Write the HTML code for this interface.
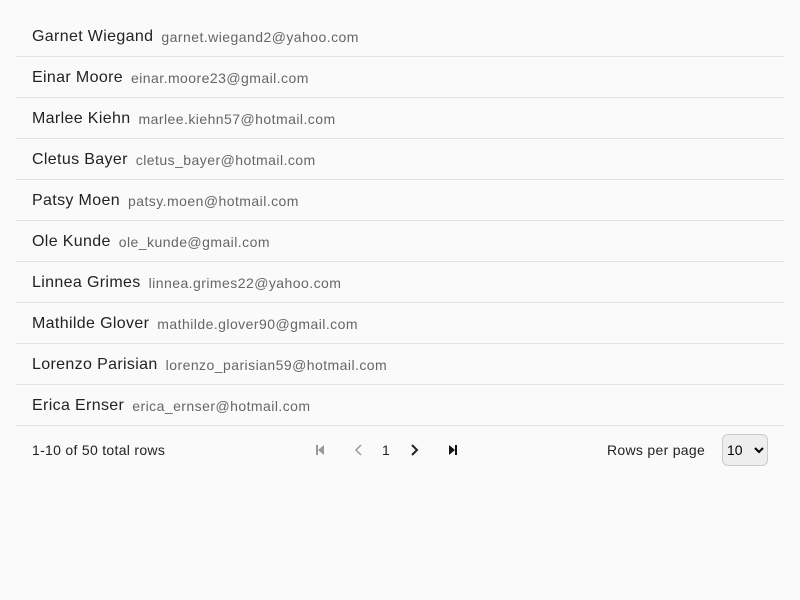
<!DOCTYPE html>
<html><head><style>
body{margin:0;background:#fafafa;font-family:"Liberation Sans",sans-serif;color:#222;}
.wrap{position:absolute;left:16px;top:16px;width:768px;}
.row{height:40px;border-bottom:1px solid #e4e4e4;display:flex;align-items:center;padding-left:16px;padding-top:1px;box-sizing:border-box;height:41px;}
.n{font-size:16px;color:#222;margin-right:8px;letter-spacing:0.35px;}
.e{font-size:14px;color:#666;letter-spacing:0.45px;}
.foot{position:absolute;top:434px;left:32px;right:32px;height:32px;font-size:14px;color:#222;letter-spacing:0.3px;}
.foot span{position:absolute;top:8px;}
select{position:absolute;left:690px;top:0;width:46px;height:32px;border:1px solid #ccc;border-radius:6px;background:#eee;font-size:14px;font-family:"Liberation Sans",sans-serif;}
svg{position:absolute;top:9px;}
</style></head><body>
<div class="wrap">
<div class="row"><span class="n">Garnet Wiegand</span><span class="e">garnet.wiegand2@yahoo.com</span></div>
<div class="row"><span class="n">Einar Moore</span><span class="e">einar.moore23@gmail.com</span></div>
<div class="row"><span class="n">Marlee Kiehn</span><span class="e">marlee.kiehn57@hotmail.com</span></div>
<div class="row"><span class="n">Cletus Bayer</span><span class="e">cletus_bayer@hotmail.com</span></div>
<div class="row"><span class="n">Patsy Moen</span><span class="e">patsy.moen@hotmail.com</span></div>
<div class="row"><span class="n">Ole Kunde</span><span class="e">ole_kunde@gmail.com</span></div>
<div class="row"><span class="n">Linnea Grimes</span><span class="e">linnea.grimes22@yahoo.com</span></div>
<div class="row"><span class="n">Mathilde Glover</span><span class="e">mathilde.glover90@gmail.com</span></div>
<div class="row"><span class="n">Lorenzo Parisian</span><span class="e">lorenzo_parisian59@hotmail.com</span></div>
<div class="row"><span class="n">Erica Ernser</span><span class="e">erica_ernser@hotmail.com</span></div>
</div>
<div class="foot">
<span style="left:0">1-10 of 50 total rows</span>
<svg style="left:281px" width="14" height="14" viewBox="0 0 14 14"><rect x="3" y="2" width="2" height="10" fill="#999"/><path d="M11 2 L5 7 L11 12Z" fill="#999"/></svg>
<svg style="left:320px" width="14" height="14" viewBox="0 0 14 14"><path d="M9 2 L4 7 L9 12" fill="none" stroke="#999" stroke-width="1.5"/></svg>
<span style="left:350px">1</span>
<svg style="left:375px" width="14" height="14" viewBox="0 0 14 14"><path d="M5 2 L10 7 L5 12" fill="none" stroke="#222" stroke-width="2"/></svg>
<svg style="left:414px" width="14" height="14" viewBox="0 0 14 14"><path d="M3 2 L9 7 L3 12Z" fill="#111"/><rect x="9" y="2" width="2" height="10" fill="#111"/></svg>
<span style="left:575px">Rows per page</span>
<select><option>10</option></select>
</div>
</body></html>
